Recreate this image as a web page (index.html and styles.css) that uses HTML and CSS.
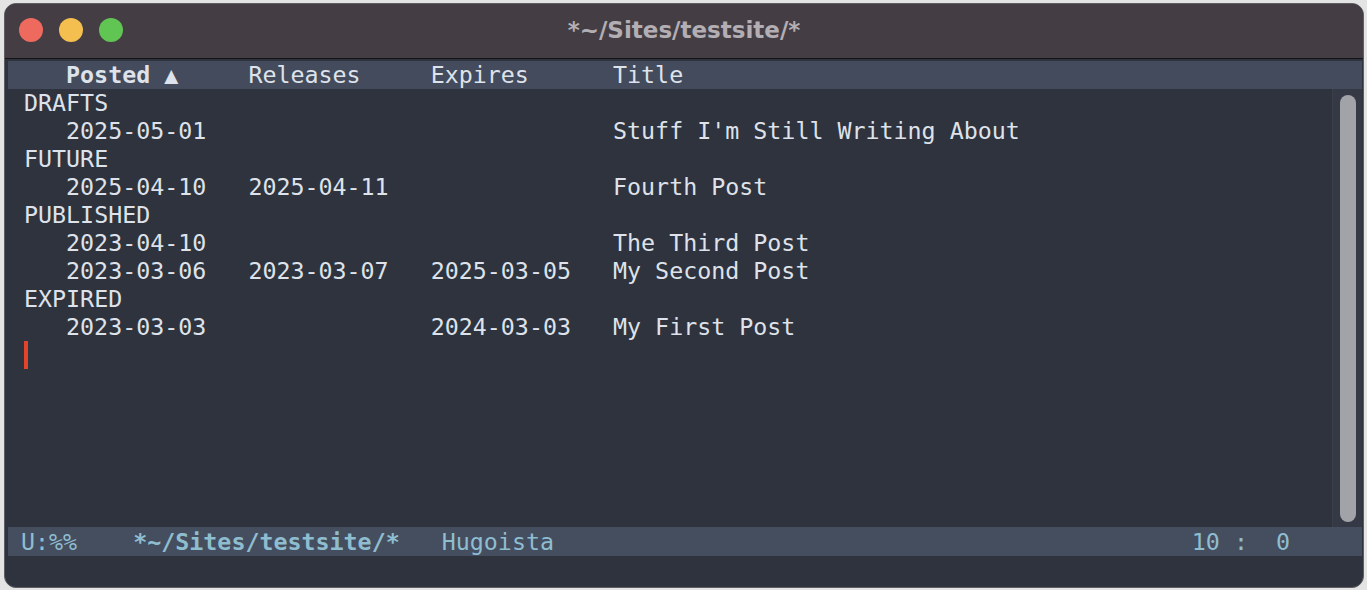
FILE: index.html
```html
<!DOCTYPE html>
<html>
<head>
<meta charset="utf-8">
<link rel="stylesheet" href="styles.css">
</head>
<body>
<div class="window">
  <div class="titlebar">
    <div class="lights">
      <span class="light red"></span>
      <span class="light yellow"></span>
      <span class="light green"></span>
    </div>
    <div class="title">*~/Sites/testsite/*</div>
    <div></div>
  </div>
  <div class="frame">
    <div class="header-line">
      <span></span>
      <span class="sorted">Posted <span class="arrow">▲</span></span>
      <span>Releases</span>
      <span>Expires</span>
      <span>Title</span>
    </div>
    <div class="body">
      <div class="buffer">
        <div class="row group">DRAFTS</div>
        <div class="row"><span></span><span>2025-05-01</span><span></span><span></span><span>Stuff I'm Still Writing About</span></div>
        <div class="row group">FUTURE</div>
        <div class="row"><span></span><span>2025-04-10</span><span>2025-04-11</span><span></span><span>Fourth Post</span></div>
        <div class="row group">PUBLISHED</div>
        <div class="row"><span></span><span>2023-04-10</span><span></span><span></span><span>The Third Post</span></div>
        <div class="row"><span></span><span>2023-03-06</span><span>2023-03-07</span><span>2025-03-05</span><span>My Second Post</span></div>
        <div class="row group">EXPIRED</div>
        <div class="row"><span></span><span>2023-03-03</span><span></span><span>2024-03-03</span><span>My First Post</span></div>
        <div class="row cursor-line"><span class="cursor"></span></div>
      </div>
      <div class="scrollbar"><div class="thumb"></div></div>
    </div>
    <div class="mode-line">
      <div class="ml-left">
        <span class="ml-status">U:%%</span>
        <span class="ml-buffer">*~/Sites/testsite/*</span>
        <span class="ml-mode">Hugoista</span>
      </div>
      <div class="ml-right">10 :  0</div>
    </div>
    <div class="echo"></div>
  </div>
</div>
</body>
</html>
```

FILE: styles.css
```css
html, body {
  margin: 0;
  padding: 0;
}
body {
  background: #e4e4e4;
  width: 1367px;
  height: 590px;
  overflow: hidden;
}
.window {
  margin: 3px 0 0 4px;
  width: 1360px;
  height: 585px;
  box-sizing: border-box;
  border: 1px solid #5f5f63;
  border-radius: 12px;
  overflow: hidden;
  background: #2f333e;
  display: flex;
  flex-direction: column;
}
.titlebar {
  height: 55px;
  box-sizing: border-box;
  padding-bottom: 2px;
  flex: none;
  background: #443e44;
  border-bottom: 1px solid #121214;
  display: grid;
  grid-template-columns: 1fr auto 1fr;
  align-items: center;
}
.lights {
  display: flex;
  gap: 16px;
  padding-left: 14px;
}
.light {
  width: 24px;
  height: 24px;
  border-radius: 50%;
  display: block;
}
.red { background: #ee6a5f; }
.yellow { background: #f5bf4f; }
.green { background: #61c554; }
.title {
  font-family: "DejaVu Sans", sans-serif;
  font-weight: bold;
  font-size: 23px;
  color: #b3aeb3;
}
.frame {
  flex: 1;
  display: flex;
  flex-direction: column;
  padding: 2px 1px 0 3px;
  font-family: "DejaVu Sans Mono", monospace;
  font-size: 23.3px;
  color: #dee2ea;
}
.header-line {
  height: 28px;
  line-height: 28px;
  background: #434b5c;
  display: grid;
  grid-template-columns: 3ch 13ch 13ch 13ch 1fr;
  padding-left: 16px;
  white-space: pre;
}
.sorted {
  font-weight: bold;
}
.arrow {
  font-weight: normal;
}
.body {
  height: 438px;
  display: flex;
}
.buffer {
  flex: 1;
  padding-left: 16px;
}
.row {
  height: 28px;
  line-height: 28px;
  display: grid;
  grid-template-columns: 3ch 13ch 13ch 13ch 1fr;
  white-space: pre;
}
.row.group {
  display: block;
}
.cursor-line {
  display: flex;
  align-items: center;
}
.cursor {
  width: 4px;
  height: 28px;
  background: #e2432b;
}
.scrollbar {
  width: 16px;
  border-left: 1px solid #3b3f4a;
  background: #353945;
  padding: 6px 6px 5px 7px;
}
.thumb {
  width: 16px;
  height: 100%;
  background: #a2a3a9;
  border-radius: 8px;
}
.mode-line {
  height: 29px;
  line-height: 29px;
  background: #454e5f;
  color: #8fbdd0;
  display: flex;
  justify-content: space-between;
  padding: 0 72px 0 13px;
  white-space: pre;
}
.ml-left {
  display: flex;
}
.ml-status {
  width: 8ch;
}
.ml-buffer {
  font-weight: bold;
  width: 22ch;
}
.echo {
  flex: 1;
}
```
